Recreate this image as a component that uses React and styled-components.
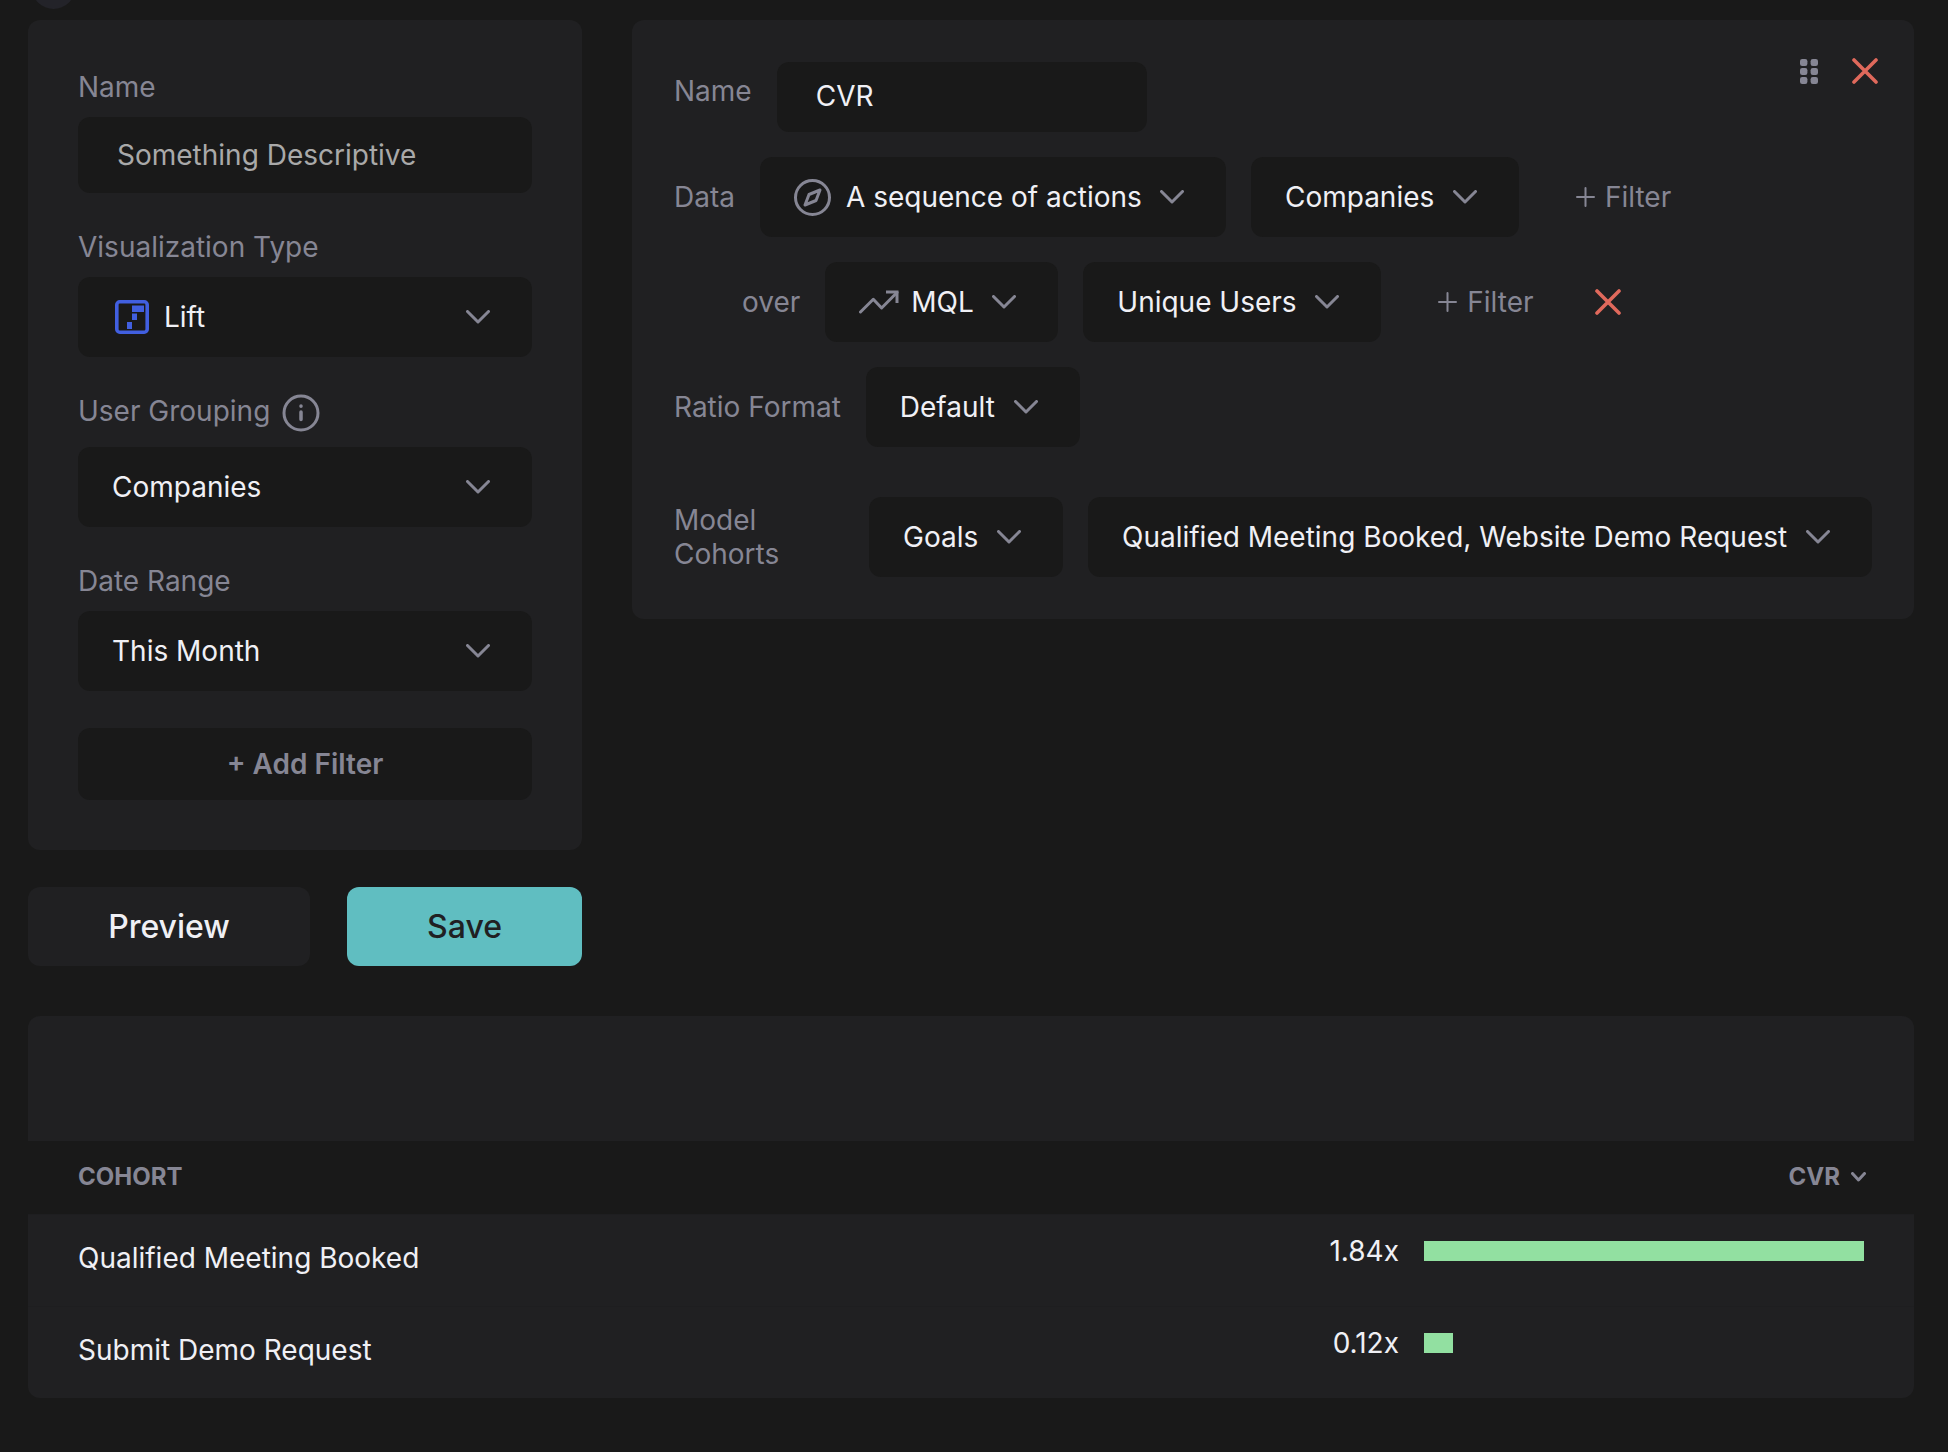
import React from "react";
import styled, { createGlobalStyle } from "styled-components";

const color = {
  page: "#191919",
  panel: "#202022",
  field: "#191919",
  muted: "#868694",
  text: "#f0f0f5",
  placeholder: "#a9a9a9",
  teal: "#60bec1",
  green: "#92e0a1",
  red: "#e0695c",
  blue: "#415fe0",
};

const GlobalStyle = createGlobalStyle`
  *, *::before, *::after { box-sizing: border-box; }
  body {
    margin: 0;
    background: ${color.page};
    color: ${color.text};
    font-family: Inter, "Liberation Sans", sans-serif;
    font-size: 28px;
    line-height: 34px;
  }
  button, input, select { font: inherit; color: inherit; border: 0; margin: 0; }
  button { background: none; padding: 0; cursor: pointer; }
`;

const Page = styled.main`
  position: relative;
  overflow: hidden;
  padding: 20px 34px 54px 28px;
`;

const CornerDot = styled.span`
  position: absolute;
  top: -34px;
  left: 32px;
  width: 43px;
  height: 43px;
  border-radius: 50%;
  background: #232329;
`;

const Builder = styled.div`
  display: flex;
  align-items: flex-start;
  gap: 50px;
`;

const Sidebar = styled.div`
  flex: 0 0 554px;
`;

const Card = styled.section`
  background: ${color.panel};
  border-radius: 12px;
`;

const SettingsCard = styled(Card)`
  display: flex;
  flex-direction: column;
  gap: 37px;
  padding: 50px;
`;

const Field = styled.div`
  display: flex;
  flex-direction: column;
  gap: 13px;
`;

const LabelRow = styled.div`
  display: flex;
  align-items: flex-start;
  gap: 12px;
  min-height: 40px;
`;

const Label = styled.label`
  color: ${color.muted};
`;

const TextInput = styled.input`
  width: ${(p) => (p.$compact ? "370px" : "100%")};
  height: ${(p) => (p.$compact ? "70px" : "76px")};
  padding: ${(p) => (p.$compact ? "0 39px 2px" : "0 39px")};
  border-radius: 12px;
  background: ${color.field};
  &::placeholder { color: ${color.placeholder}; opacity: 1; }
`;

const SelectBox = styled.div`
  display: grid;
  align-items: center;
  flex: ${(p) => (p.$grow ? "1 1 auto" : "0 0 auto")};
  height: 80px;
  border-radius: 12px;
  background: ${color.field};
  > * { grid-area: 1 / 1; }
  > svg { pointer-events: none; }
`;

const NativeSelect = styled.select`
  appearance: none;
  width: 100%;
  height: 80px;
  padding: 0 84px 0 ${(p) => p.$indent}px;
  border-radius: 12px;
  background: transparent;
`;

const Icon = styled.svg`
  display: block;
  flex: none;
  fill: none;
  stroke: currentColor;
  stroke-width: 3;
  stroke-linecap: round;
  stroke-linejoin: round;
  color: ${(p) => p.$color || color.muted};
`;

const LeadSlot = styled.span`
  padding-left: ${(p) => p.$pad}px;
  pointer-events: none;
`;

const ChevronIcon = styled(Icon)`
  justify-self: end;
  margin-right: 42px;
`;

const AddFilter = styled.button`
  height: 72px;
  border-radius: 12px;
  background: ${color.field};
  color: ${color.muted};
  font-weight: 600;
`;

const Actions = styled.div`
  display: flex;
  gap: 37px;
  margin-top: 37px;
`;

const ActionButton = styled.button`
  flex: ${(p) => (p.$primary ? "0 0 235px" : "1")};
  height: 79px;
  border-radius: 12px;
  background: ${(p) => (p.$primary ? color.teal : color.panel)};
  color: ${(p) => (p.$primary ? "#202022" : color.text)};
  font-size: 32px;
  font-weight: 500;
`;

const MetricCard = styled(Card)`
  flex: 1;
  position: relative;
  padding: 42px;
`;

const MetricRows = styled.div`
  display: flex;
  flex-direction: column;
  gap: 25px;
`;

const Row = styled.div`
  display: flex;
  align-items: ${(p) => (p.$top ? "flex-start" : "center")};
  gap: 25px;
  padding-left: ${(p) => (p.$nested ? "68px" : "0")};
  margin-top: ${(p) => (p.$spaced ? "25px" : "0")};
`;

const RowLabel = styled(Label)`
  flex: none;
  width: ${(p) => (p.$wide ? "170px" : "auto")};
  padding: ${(p) => (p.$top ? "12px 0" : "0")};
`;

const FilterButton = styled.button`
  display: flex;
  align-items: center;
  gap: 10px;
  padding-left: 32px;
  color: ${color.muted};
`;

const RemoveButton = styled.button`
  padding-left: 36px;
`;

const CardTools = styled.div`
  position: absolute;
  top: 38px;
  right: 36px;
  display: flex;
  align-items: center;
  gap: 34px;
`;

const Results = styled(Card)`
  margin-top: 50px;
  padding-top: 125px;
  overflow: hidden;
`;

const Table = styled.table`
  width: 100%;
  border-collapse: collapse;
`;

const HeadCell = styled.th`
  height: 73px;
  padding: 0 ${(p) => (p.$end ? "48px" : "50px")};
  background: ${color.page};
  color: ${color.muted};
  font-size: 24px;
  font-weight: 700;
  text-align: left;
`;

const SortButton = styled.button`
  display: flex;
  align-items: center;
  gap: 11px;
  margin-left: auto;
  color: inherit;
`;

const Cell = styled.td`
  height: 92px;
  padding: ${(p) => (p.$end ? "0 50px 18px" : "0 50px 4px")};
  border-top: 1px solid #1e1e20;
`;

const Measure = styled.div`
  display: flex;
  align-items: center;
  justify-content: flex-end;
  gap: 25px;
`;

const BarTrack = styled.div`
  width: 440px;
`;

const Bar = styled.div`
  height: 20px;
  background: ${color.green};
`;

const Chevron = () => (
  <ChevronIcon width="24" height="14" viewBox="0 0 24 14" aria-hidden="true">
    <path d="M1.5 1.5 12 12 22.5 1.5" />
  </ChevronIcon>
);

const CloseIcon = () => (
  <Icon $color={color.red} width="26" height="26" viewBox="0 0 26 26" aria-hidden="true">
    <path strokeWidth="3.6" d="M2 2 24 24M24 2 2 24" />
  </Icon>
);

const InfoIcon = () => (
  <Icon width="38" height="38" viewBox="0 0 38 38" role="img" aria-label="About user grouping">
    <circle cx="19" cy="19" r="17" />
    <path strokeWidth="3.5" d="M19 18v7.500M19 12v.2" />
  </Icon>
);

const LiftIcon = () => (
  <Icon $color={color.blue} width="34" height="34" viewBox="0 0 34 34" aria-hidden="true">
    <rect x="1.800" y="1.800" width="30.400" height="30.400" rx="3" strokeWidth="3.6" />
    <path fill="currentColor" stroke="none" d="M17 5.500h12v6.500H17zM17 13.500h5v6.500h-5zM12 22h5v7h-5z" />
  </Icon>
);

const CompassIcon = () => (
  <Icon width="37" height="37" viewBox="0 0 37 37" aria-hidden="true">
    <circle cx="18.500" cy="18.500" r="17" />
    <path d="M26 11 22 21.500 11 26 15 15.500z" />
  </Icon>
);

const TrendIcon = () => (
  <Icon width="40" height="24" viewBox="0 0 40 24" aria-hidden="true">
    <path d="M1.500 22 14.300 9.300l8.300 8.700L38 2.500" />
    <path strokeLinejoin="miter" strokeLinecap="butt" d="M27 2h11v11" />
  </Icon>
);

const PlusIcon = () => (
  <Icon width="19" height="20" viewBox="0 0 19 20" aria-hidden="true">
    <path strokeWidth="2" d="M1 10h17M9.500 1v18" />
  </Icon>
);

const GripIcon = () => (
  <Icon width="18" height="25" viewBox="0 0 18 25" aria-hidden="true">
    {[0, 9, 18].map((y) =>
      [0, 10.6].map((x) => (
        <rect key={`${x}-${y}`} x={x} y={y} width="7.4" height="7" rx="2.2" fill="currentColor" stroke="none" />
      ))
    )}
  </Icon>
);

const SortIcon = () => (
  <Icon width="15" height="10" viewBox="0 0 15 10" aria-hidden="true">
    <path d="M1.500 1.500 7.500 8l6-6.500" />
  </Icon>
);

const Select = ({ id, label, value, icon, indent = 34, lead = 34, grow }) => (
  <SelectBox $grow={grow}>
    <NativeSelect id={id} aria-label={label} $indent={indent} defaultValue={value}>
      <option>{value}</option>
    </NativeSelect>
    {icon && <LeadSlot $pad={lead}>{icon}</LeadSlot>}
    <Chevron />
  </SelectBox>
);

const Filter = () => (
  <FilterButton type="button">
    <PlusIcon />
    Filter
  </FilterButton>
);

const cohorts = [
  { name: "Qualified Meeting Booked", value: 1.84 },
  { name: "Submit Demo Request", value: 0.12 },
];
const highest = Math.max(...cohorts.map((c) => c.value));

export default function App() {
  return (
    <>
      <GlobalStyle />
      <Page>
        <CornerDot />
        <Builder>
          <Sidebar>
            <SettingsCard>
              <Field>
                <Label htmlFor="report-name">Name</Label>
                <TextInput id="report-name" placeholder="Something Descriptive" />
              </Field>
              <Field>
                <Label htmlFor="viz">Visualization Type</Label>
                <Select id="viz" value="Lift" icon={<LiftIcon />} indent={86} lead={37} />
              </Field>
              <Field>
                <LabelRow>
                  <Label htmlFor="grouping">User Grouping</Label>
                  <InfoIcon />
                </LabelRow>
                <Select id="grouping" value="Companies" />
              </Field>
              <Field>
                <Label htmlFor="range">Date Range</Label>
                <Select id="range" value="This Month" />
              </Field>
              <AddFilter type="button">+ Add Filter</AddFilter>
            </SettingsCard>
            <Actions>
              <ActionButton type="button">Preview</ActionButton>
              <ActionButton type="button" $primary>Save</ActionButton>
            </Actions>
          </Sidebar>

          <MetricCard>
            <MetricRows>
              <Row $top>
                <RowLabel htmlFor="metric-name" $top>Name</RowLabel>
                <TextInput id="metric-name" $compact defaultValue="CVR" />
              </Row>
              <Row>
                <RowLabel htmlFor="data">Data</RowLabel>
                <Select id="data" value="A sequence of actions" icon={<CompassIcon />} indent={86} />
                <Select label="Data unit" value="Companies" />
                <Filter />
              </Row>
              <Row $nested>
                <RowLabel htmlFor="over">over</RowLabel>
                <Select id="over" value="MQL" icon={<TrendIcon />} indent={86} />
                <Select label="Over unit" value="Unique Users" />
                <Filter />
                <RemoveButton type="button" aria-label="Remove denominator"><CloseIcon /></RemoveButton>
              </Row>
              <Row>
                <RowLabel htmlFor="ratio">Ratio Format</RowLabel>
                <Select id="ratio" value="Default" />
              </Row>
              <Row $spaced>
                <RowLabel htmlFor="cohorts" $wide>Model Cohorts</RowLabel>
                <Select id="cohorts" value="Goals" />
                <Select label="Goals" grow value="Qualified Meeting Booked, Website Demo Request" />
              </Row>
            </MetricRows>
            <CardTools>
              <button type="button" aria-label="Reorder"><GripIcon /></button>
              <button type="button" aria-label="Remove metric"><CloseIcon /></button>
            </CardTools>
          </MetricCard>
        </Builder>

        <Results>
          <Table>
            <thead>
              <tr>
                <HeadCell scope="col">COHORT</HeadCell>
                <HeadCell scope="col" $end>
                  <SortButton type="button">
                    CVR
                    <SortIcon />
                  </SortButton>
                </HeadCell>
              </tr>
            </thead>
            <tbody>
              {cohorts.map((c) => (
                <tr key={c.name}>
                  <Cell>{c.name}</Cell>
                  <Cell $end>
                    <Measure>
                      {c.value.toFixed(2)}x
                      <BarTrack>
                        <Bar style={{ width: `${(c.value / highest) * 100}%` }} />
                      </BarTrack>
                    </Measure>
                  </Cell>
                </tr>
              ))}
            </tbody>
          </Table>
        </Results>
      </Page>
    </>
  );
}
